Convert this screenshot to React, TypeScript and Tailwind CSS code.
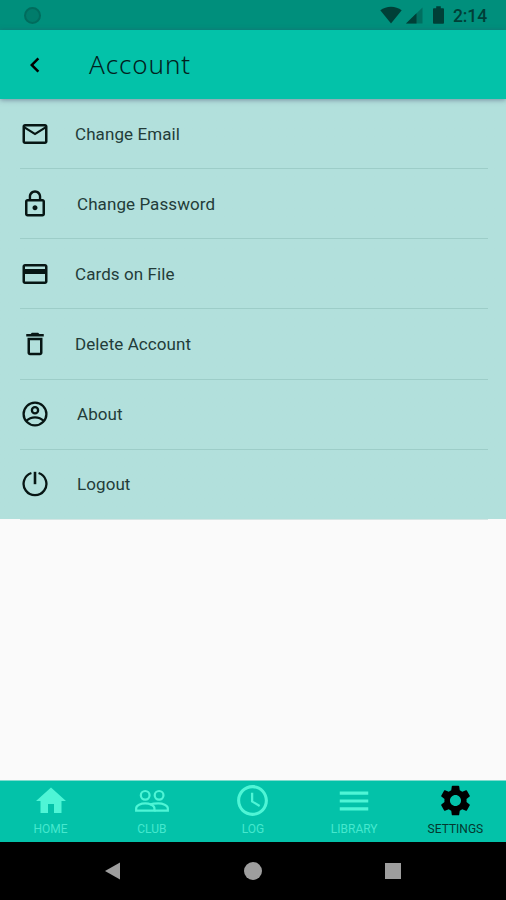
import type { ReactNode } from "react";
import {
  MdMailOutline, MdLockOutline, MdPayment, MdDeleteOutline,
  MdHome, MdSettings, MdMenu, MdAccessTime, MdKeyboardArrowLeft,
} from "react-icons/md";

const PersonIcon = () => (
  <svg width="26" height="26" viewBox="0 0 26 26" fill="none" stroke="currentColor" strokeWidth="2.3">
    <circle cx="13" cy="13" r="11.4" />
    <circle cx="13" cy="9.3" r="3.1" />
    <path d="M4.500 19.800c2.300-2.400 5.300-3.500 8.500-3.500s6.200 1.100 8.500 3.500" />
  </svg>
);

const PowerIcon = () => (
  <svg width="26" height="26" viewBox="0 0 26 26" fill="none" stroke="currentColor" strokeWidth="2.3">
    <path d="M9.400 2a11.400 11.400 0 1 0 7.200 0" />
    <path d="M13 .8v12.400" strokeWidth="2.600" />
  </svg>
);

const ClubIcon = () => (
  <svg width="34" height="24" viewBox="0 0 35 24" fill="none" stroke="currentColor" strokeWidth="2.3">
    <circle cx="10.500" cy="6.200" r="4.500" />
    <circle cx="24.800" cy="6.200" r="4.500" />
    <path d="M1.200 22v-2.600c0-2.800 5-4.900 9.300-4.900s9.500 2.100 9.500 4.900V22z" />
    <path d="M15.200 15.600c2.300-.7 5.600-1.100 8.900-1.100 4.300 0 9.700 2.100 9.700 4.900V22H20" />
  </svg>
);

type Row = { label: string; icon: ReactNode; pad: string };

const ROWS: Row[] = [
  { label: "Change Email",    icon: <MdMailOutline size={30} />,                   pad: "pl-[20px]" },
  { label: "Change Password", icon: <MdLockOutline size={30} className="mt-px" />, pad: "pl-[22px]" },
  { label: "Cards on File",   icon: <MdPayment size={30} />,                       pad: "pl-[20px]" },
  { label: "Delete Account",  icon: <MdDeleteOutline size={30} />,                 pad: "pl-[20px]" },
  { label: "About",           icon: <PersonIcon />,                                pad: "pl-[22px]" },
  { label: "Logout",          icon: <PowerIcon />,                                 pad: "pl-[22px]" },
];

const TABS = [
  { label: "HOME",     icon: <MdHome size={36} />,       color: "text-[#4ff5d6]", text: "text-[#45e8ce]" },
  { label: "CLUB",     icon: <ClubIcon />,               color: "text-[#4ff5d6]", text: "text-[#45e8ce]" },
  { label: "LOG",      icon: <MdAccessTime size={37} />, color: "text-[#4ff5d6]", text: "text-[#45e8ce]" },
  { label: "LIBRARY",  icon: <MdMenu size={38} />,       color: "text-[#4ff5d6]", text: "text-[#45e8ce]" },
  { label: "SETTINGS", icon: <MdSettings size={37} />,   color: "text-black",     text: "text-[#04382f]" },
];

function StatusBar() {
  return (
    <div className="flex h-[30px] shrink-0 items-center justify-between bg-[#008f7c] pl-6 pr-[19px] text-[#003f37]">
      <div className="size-[17px] rounded-full border-2 border-[#006c5d] bg-[#007c6b]" />
      <div className="flex items-center">
        <svg width="22" height="18" viewBox="0 0 22 18" fill="currentColor">
          <path d="M.3 4.300C6.400-.4 15.600-.4 21.700 4.300L11 17.500z" />
        </svg>
        <svg className="ml-[3px]" width="18" height="18" viewBox="0 0 18 18" fill="currentColor">
          <path d="M17.500 1.500v16H1z" opacity=".4" />
          <path d="M11.500 7.300v10.200H1z" />
        </svg>
        <svg className="ml-[10px]" width="11" height="18" viewBox="0 0 12 19" fill="currentColor">
          <path d="M3.500 0h5v2H11q1 0 1 1v15q0 1-1 1H1q-1 0-1-1V3q0-1 1-1h2.500z" />
        </svg>
        <span className="ml-[9px] mt-[3px] text-[17.500px] leading-none font-medium tracking-[-0.1px]">2:14</span>
      </div>
    </div>
  );
}

export default function App() {
  return (
    <div className="flex h-[900px] w-[506px] flex-col overflow-hidden bg-[#fafafa] font-['Roboto',sans-serif]">
      <StatusBar />
      <header className="z-10 flex h-[69px] shrink-0 items-center bg-[#03c2a9] pl-[20px] shadow-[0_1px_5px_rgba(60,60,100,0.5)]">
        <MdKeyboardArrowLeft size={30} className="text-black" />
        <h1 className="-mt-[2px] ml-[39px] font-['Noto_Sans',sans-serif] text-[26px] leading-none font-light tracking-[0.9px] text-[#02211d]">Account</h1>
      </header>

      <ul className="h-[421px] shrink-0 bg-linear-to-b from-[#b2e0dc] from-[420px] to-[#fafafa] to-[420px]">
        {ROWS.map(({ label, icon, pad }) => (
          <li key={label} className="ml-5 mr-[18px] flex h-[70.170px] items-center border-b border-[#9dcdc8] last:border-[#d5e6e4]">
            <span className="flex w-[30px] shrink-0 justify-center text-[#071614]">{icon}</span>
            <span className={`ml-[5px] mt-px text-[17px] leading-none tracking-[0.080px] text-[#233c39] ${pad}`}>{label}</span>
          </li>
        ))}
      </ul>

      <nav className="mt-auto grid h-[62px] shrink-0 grid-cols-5 border-t border-[#80dccf] bg-[#03c2a9]">
        {TABS.map(({ label, icon, color, text }) => (
          <div key={label} className="flex flex-col items-center pt-px">
            <span className={`flex h-[37px] items-center ${color}`}>{icon}</span>
            <span className={`mt-[3px] text-[12px] leading-[14px] ${text}`}>{label}</span>
          </div>
        ))}
      </nav>

      <div className="flex h-[58px] shrink-0 items-center justify-center gap-[123px] bg-black text-[#9e9e9e]">
        <svg width="16" height="18" viewBox="0 0 16 18" fill="currentColor"><path d="M0 9 15 .5v17z" /></svg>
        <div className="size-[18px] rounded-full bg-[#9e9e9e]" />
        <div className="size-[16px] bg-[#9e9e9e]" />
      </div>
    </div>
  );
}
